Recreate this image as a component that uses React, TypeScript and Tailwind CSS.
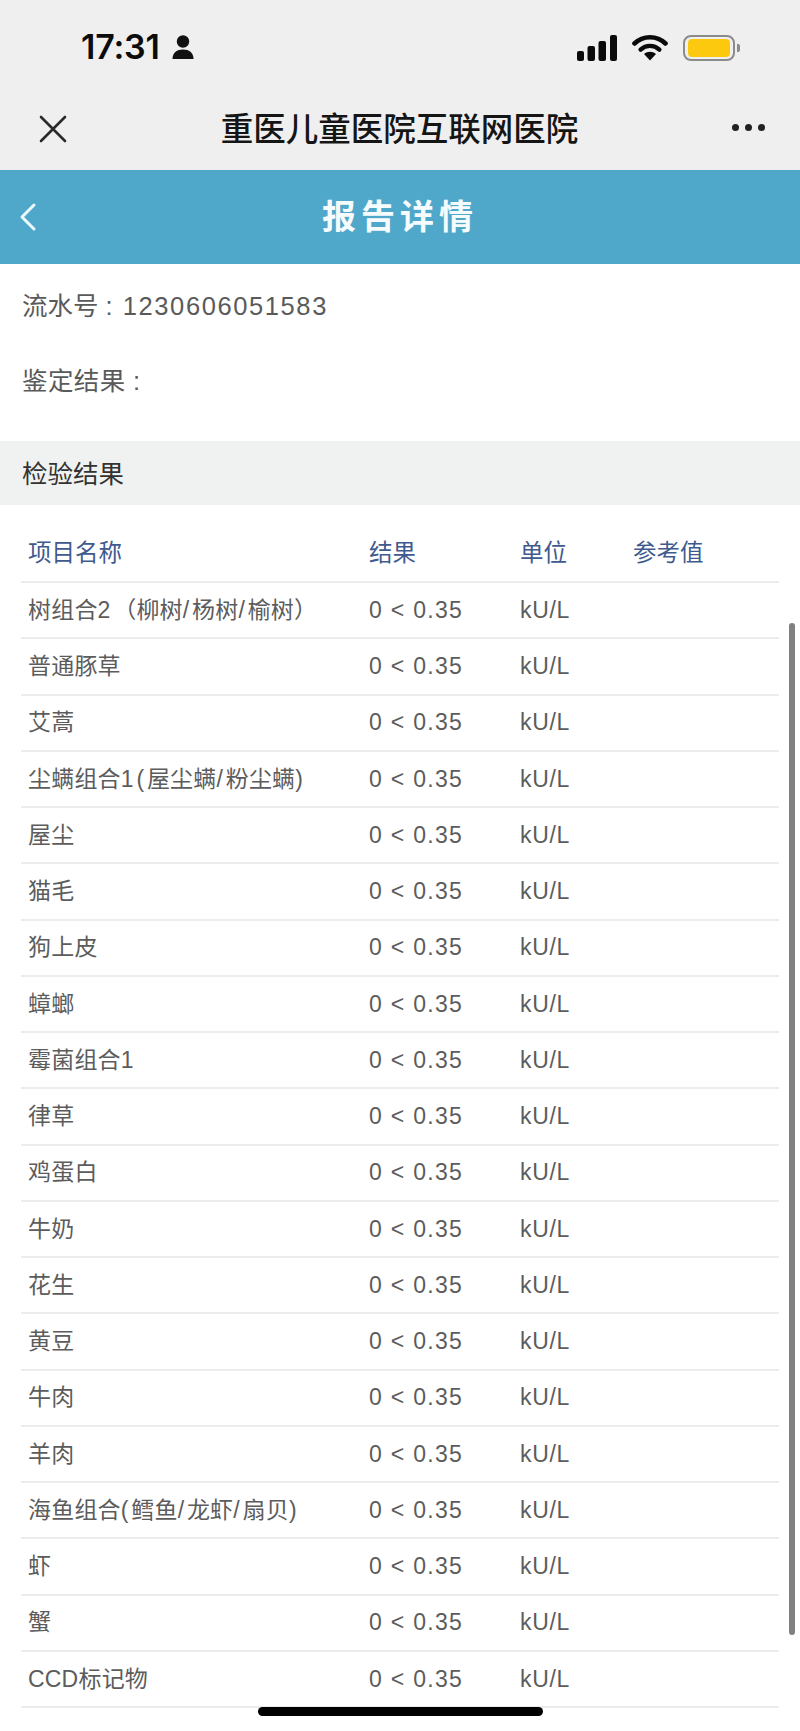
const rows = [
  "树组合2（柳树/杨树/榆树）",
  "普通豚草",
  "艾蒿",
  "尘螨组合1(屋尘螨/粉尘螨)",
  "屋尘",
  "猫毛",
  "狗上皮",
  "蟑螂",
  "霉菌组合1",
  "律草",
  "鸡蛋白",
  "牛奶",
  "花生",
  "黄豆",
  "牛肉",
  "羊肉",
  "海鱼组合(鳕鱼/龙虾/扇贝)",
  "虾",
  "蟹",
  "CCD标记物",
];

const sans = "font-['Liberation_Sans','Noto_Sans_CJK_SC',sans-serif]";

function Person() {
  return (
    <svg width="22" height="24" viewBox="0 0 22 24" fill="#111">
      <circle cx="11" cy="6.5" r="6.2" />
      <path d="M0.5 24 C0.5 17.5 5 14.5 11 14.5 C17 14.5 21.5 17.5 21.5 24 Z" />
    </svg>
  );
}

function Signal() {
  return (
    <svg width="42" height="26" viewBox="0 0 42 26" fill="#0a0a0a" className="mr-[-1px]">
      <rect x="1" y="16" width="7" height="10" rx="2" />
      <rect x="11.5" y="11" width="7.5" height="15" rx="2" />
      <rect x="22.5" y="6" width="7.5" height="20" rx="2" />
      <rect x="34" y="0" width="7" height="26" rx="2" />
    </svg>
  );
}

function Wifi() {
  return (
    <svg width="36" height="27" viewBox="0 0 36 27" fill="none">
      <path d="M2.5 9.5 C11 1.2 25 1.2 33.5 9.5" stroke="#0a0a0a" strokeWidth="4.6" strokeLinecap="round" />
      <path d="M8.6 15.6 C14 10.6 22 10.6 27.4 15.6" stroke="#0a0a0a" strokeWidth="4.4" strokeLinecap="round" />
      <path d="M12 20 C15.5 17 20.5 17 24 20 L18 26.5 Z" fill="#0a0a0a" />
    </svg>
  );
}

function Battery() {
  return (
    <div className="flex items-center gap-[2px]">
      <div className="flex h-[26px] w-[52px] items-center justify-center rounded-[8px] border-2 border-[#8b8b8e]">
        <div className="h-[18px] w-[42px] rounded-[4px] bg-[#fcc90f]" />
      </div>
      <div className="h-[8px] w-[3px] rounded-r-[2px] bg-[#8b8b8e]" />
    </div>
  );
}

function Name({ text }: { text: string }) {
  const parts = text.split(/([0-9()/]+)/);
  return (
    <>
      {parts.map((part, i) =>
        /^[0-9()/]+$/.test(part) ? (
          <span key={i} className="tracking-[2.8px]">
            {part}
          </span>
        ) : (
          <span key={i}>{part}</span>
        ),
      )}
    </>
  );
}

function Row({ name }: { name: string }) {
  return (
    <div className="flex h-[56.25px] items-center border-b-2 border-[#ececec] pl-[7px] text-[23px] text-[#5c5c5c]">
      <div className="w-[341px] whitespace-nowrap tracking-[0.2px]">
        <Name text={name} />
      </div>
      <div className="w-[151px] tracking-[1.3px]">0 &lt; 0.35</div>
      <div className="w-[113px] tracking-[0.7px]">kU/L</div>
    </div>
  );
}

export default function App() {
  return (
    <div className={`relative flex h-[1731px] w-[800px] flex-col overflow-hidden bg-white ${sans}`}>
      <header className="flex h-[170px] flex-col bg-[#efefef]">
        <div className="flex h-[95px] items-start justify-between pl-[81px] pr-[60px] pt-[34px]">
          <div className="flex items-center gap-[12px]">
            <span className="font-['Inter',sans-serif] text-[34px] leading-[26px] font-semibold tracking-[-0.2px] text-[#0c0c0c]">17:31</span>
            <Person />
          </div>
          <div className="flex items-center gap-[15px]">
            <Signal />
            <Wifi />
            <Battery />
          </div>
        </div>
        <div className="flex h-[75px] items-start justify-between pl-[39px] pr-[35px]">
          <svg width="28" height="28" viewBox="0 0 28 28" className="mt-[20px]" stroke="#2a2a2a" strokeWidth="2.6" strokeLinecap="round">
            <path d="M2 2 L26 26 M26 2 L2 26" />
          </svg>
          <div className="mt-[14px] text-[32.5px] leading-[36px] font-medium text-[#151515] font-['Noto_Sans_CJK_SC',sans-serif]">重医儿童医院互联网医院</div>
          <div className="mt-[29px] flex gap-[6px]">
            <span className="h-[7px] w-[7px] rounded-full bg-[#222]" />
            <span className="h-[7px] w-[7px] rounded-full bg-[#222]" />
            <span className="h-[7px] w-[7px] rounded-full bg-[#222]" />
          </div>
        </div>
      </header>

      <div className="relative flex h-[94px] items-center justify-center bg-[#4fa8ca] pb-[6px]">
        <svg width="20" height="30" viewBox="0 0 20 30" className="absolute left-[18px] top-[32px]" fill="none" stroke="#eef9fd" strokeWidth="3" strokeLinecap="round" strokeLinejoin="round">
          <path d="M16 3 L4 15 L16 27" />
        </svg>
        <div className="text-[34px] font-bold tracking-[5px] text-[#f6fbfd] font-['Noto_Sans_CJK_SC',sans-serif]">报告详情</div>
      </div>

      <div className="flex h-[177px] flex-col px-[22px] pt-[24px] text-[25.5px] leading-[36px] text-[#5a5a5a]">
        <div>
          流水号 : <span className="ml-[3px] tracking-[1.6px]">1230606051583</span>
        </div>
        <div className="mt-[39px] tracking-[0.4px]">鉴定结果 :</div>
      </div>

      <div className="flex h-[64px] items-center bg-[#f0f2f2] px-[22px] pt-[3px] text-[25.5px] text-[#333]">检验结果</div>

      <div className="flex flex-col px-[21px]">
        <div className="flex h-[78px] items-end border-b-2 border-[#ececec] pb-[10px] pl-[7px] text-[23.5px] leading-[36px] text-[#3f5a8e]">
          <div className="w-[341px]">项目名称</div>
          <div className="w-[151px]">结果</div>
          <div className="w-[113px]">单位</div>
          <div>参考值</div>
        </div>
        {rows.map((name) => (
          <Row key={name} name={name} />
        ))}
      </div>

      <div className="absolute left-[789px] top-[623px] h-[1012px] w-[6px] rounded-full bg-[#808080]" />
      <div className="absolute left-[258px] top-[1707px] h-[9px] w-[285px] rounded-full bg-black" />
    </div>
  );
}
